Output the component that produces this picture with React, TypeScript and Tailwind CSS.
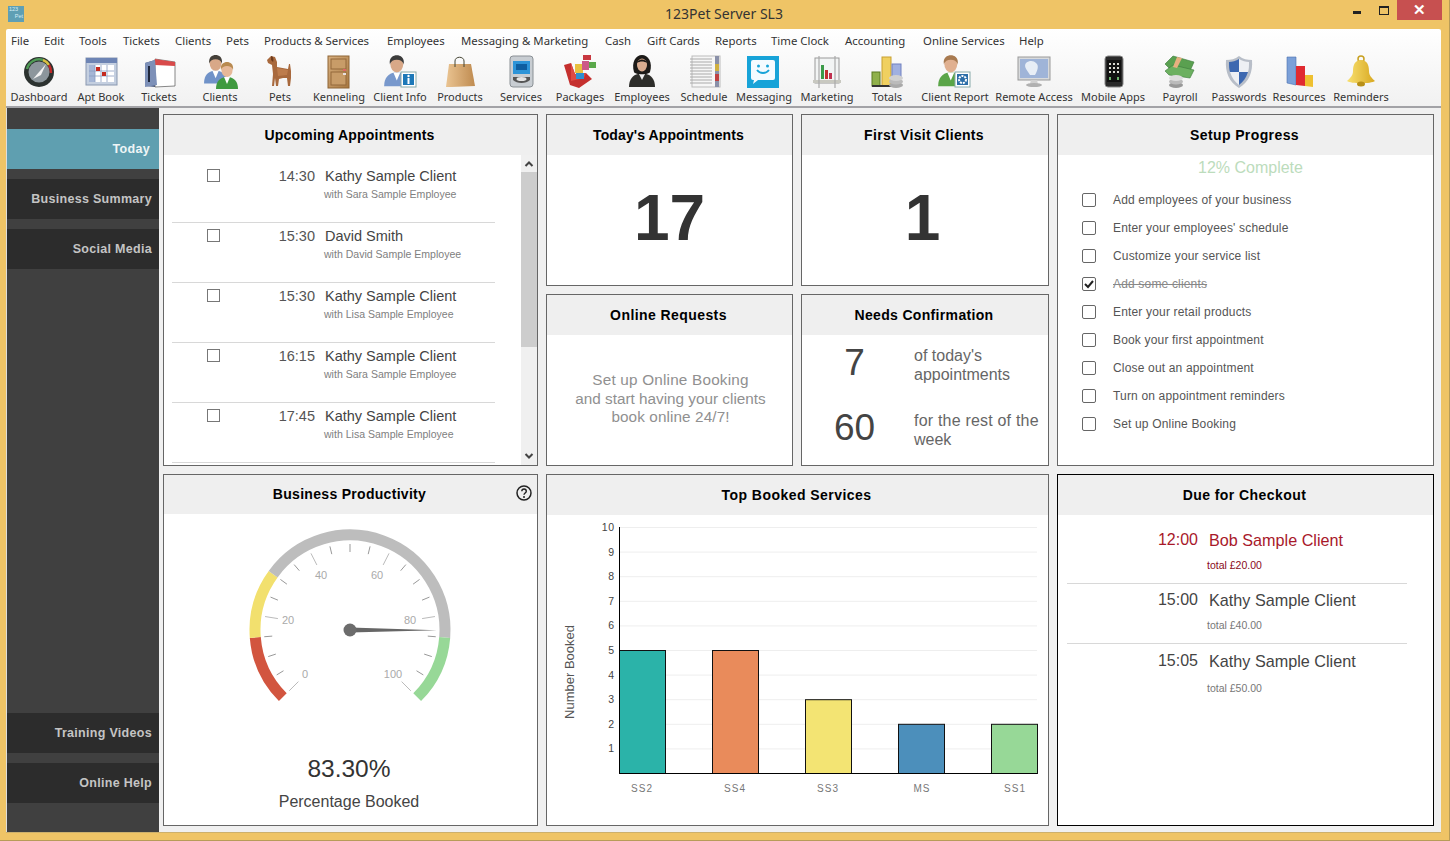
import React from "react";

const menu = [
  ["File", "w-[33px]"], ["Edit", "w-[35px]"], ["Tools", "w-[44px]"], ["Tickets", "w-[52px]"], ["Clients", "w-[51px]"],
  ["Pets", "w-[38px]"], ["Products & Services", "w-[123px]"], ["Employees", "w-[74px]"], ["Messaging & Marketing", "w-[144px]"],
  ["Cash", "w-[42px]"], ["Gift Cards", "w-[68px]"], ["Reports", "w-[56px]"], ["Time Clock", "w-[74px]"], ["Accounting", "w-[78px]"],
  ["Online Services", "w-[96px]"], ["Help", "w-[40px]"],
];

function Person({ x = 0, y = 0, s = 1, suit = "#6f8fc0", hair = "#3a3a3a", skin = "#d8a888", shirt = "#fff" }: any) {
  return (
    <g transform={`translate(${x} ${y}) scale(${s})`}>
      <path d="M1 28c0-8 4-11 9-12h4c5 1 9 4 9 12z" fill={suit} />
      <path d="M9 16l3 7 3-7z" fill={shirt} />
      <ellipse cx="12" cy="9" rx="5.6" ry="7" fill={skin} />
      <path d="M6 9C5 3 9 1 12 1s7 2 6 8c-1-3-3-4-6-4S7 6 6 9z" fill={hair} />
    </g>
  );
}

const icons: Record<string, React.ReactNode> = {
  Dashboard: (
    <>
      <circle cx="18" cy="18" r="15" fill="#2c3230" />
      <path d="M6 15A12.500 12.500 0 0 1 22 6" fill="none" stroke="#4f9a55" strokeWidth="2.500" />
      <path d="M22 6a12.500 12.500 0 0 1 6 5" fill="none" stroke="#d8c040" strokeWidth="2.500" />
      <path d="M28 11a12.500 12.500 0 0 1 2 8" fill="none" stroke="#c02828" strokeWidth="2.500" />
      <circle cx="18" cy="18" r="10.500" fill="#8c969c" />
      <path d="M12 25L25 10l-5 11z" fill="#f2f2f2" />
    </>
  ),
  "Apt Book": (
    <>
      <rect x="3" y="4" width="31" height="27" fill="#c4cfe0" stroke="#8a98b0" />
      <rect x="3" y="4" width="31" height="5" fill="#6d84b4" />
      <rect x="6" y="11" width="25" height="17" fill="#fff" />
      <path d="M6 11h6v17H6z" fill="#7f97c4" opacity=".7" />
      <path d="M12 11v17M18 11v17M24 11v17M6 17h25M6 22h25" stroke="#8b9cc0" strokeWidth=".8" />
      <rect x="13" y="13" width="4" height="4" fill="#c42a20" />
      <rect x="19" y="18" width="4" height="4" fill="#c42a20" />
    </>
  ),
  Tickets: (
    <>
      <path d="M4 9l10-3v27L4 32z" fill="#4a5a80" />
      <path d="M14 5l20 3v24l-20 1z" fill="#fff" stroke="#555" strokeWidth=".7" />
      <path d="M14 5l20 3v4l-20-1z" fill="#d84a4a" />
      <path d="M4 9l10-3 2 25-12 2z" fill="#7d90b8" />
      <path d="M8 12v16" stroke="#20283c" strokeWidth="2" />
    </>
  ),
  Clients: (
    <>
      <Person x={1} y={0} s={1.05} suit="#7092c8" hair="#45403a" />
      <Person x={13} y={7} s={1} suit="#3f9a3f" hair="#b88a50" skin="#e6b898" />
    </>
  ),
  Pets: (
    <>
      <path d="M5 6L9 2l4 1 2 5v5l11 2 1-5h1l1 7v7l-1 8h-2l-1-8h-4l-4 1-1 7h-2l-1-8-1 8h-2l1-12-1-9-4-2z" fill="#a8693d" />
      <path d="M9 2c2 0 3 3 2 6L9 6z" fill="#6e3c1e" />
      <path d="M15 14l11 2-1 5-9 1z" fill="#bd7c4c" />
    </>
  ),
  Kenneling: (
    <>
      <defs>
        <linearGradient id="door" x1="0" x2="1" y1="0" y2="1"><stop offset="0" stopColor="#d8b080" /><stop offset="1" stopColor="#a87840" /></linearGradient>
      </defs>
      <rect x="7" y="2" width="21" height="32" fill="url(#door)" stroke="#8e6434" />
      <rect x="10" y="5" width="15" height="10" fill="#c89c68" stroke="#93683a" />
      <rect x="10" y="18" width="15" height="13" fill="#c89c68" stroke="#93683a" />
      <rect x="22" y="15" width="3" height="2" fill="#d66" />
      <rect x="22" y="19" width="3" height="2" fill="#e8e0e0" />
    </>
  ),
  "Client Info": (
    <>
      <Person x={1} y={0} s={1.15} suit="#7898cc" hair="#3c3c3c" />
      <rect x="19" y="18" width="15" height="15" fill="#fff" stroke="#8aa" />
      <rect x="21" y="20" width="11" height="11" fill="#1d78b8" />
      <circle cx="26.500" cy="22" r="1.200" fill="#fff" />
      <rect x="25.500" y="24" width="2" height="6" fill="#fff" />
    </>
  ),
  Products: (
    <>
      <defs>
        <linearGradient id="bag" x1="0" x2="1" y1="0" y2="0"><stop offset="0" stopColor="#eac492" /><stop offset="1" stopColor="#bf8b50" /></linearGradient>
      </defs>
      <path d="M7 10h22l4 22-24 1H4z" fill="url(#bag)" />
      <path d="M13 13V7c0-5 9-5 9 0v6" fill="none" stroke="#443" strokeWidth="1" />
    </>
  ),
  Services: (
    <>
      <rect x="7" y="2" width="23" height="31" rx="3" fill="#c8cdd2" stroke="#8a9095" />
      <rect x="10" y="7" width="17" height="13" fill="#2d94d8" />
      <rect x="13" y="10" width="11" height="6" fill="#0e5ea0" />
      <path d="M10 23h17v3c-4 4-13 4-17 0z" fill="#555" />
      <ellipse cx="18.500" cy="25" rx="5" ry="2" fill="#e4e4e4" />
    </>
  ),
  Packages: (
    <>
      <path d="M2 11l7-2 4 11 11-1 6 6-13 9-9-3z" fill="#c5302e" />
      <path d="M9 9l4 11 11-1-2 5-13 3z" fill="#dd4a44" />
      <rect x="13" y="10" width="8" height="9" fill="#e8c040" />
      <rect x="20" y="7" width="7" height="9" fill="#cc5a88" />
      <rect x="21" y="1" width="8" height="5" fill="#c83840" />
      <rect x="27" y="8" width="7" height="6" fill="#5aa84a" />
      <rect x="14" y="19" width="8" height="6" fill="#2f8fd0" />
    </>
  ),
  Employees: (
    <>
      <path d="M5 33c0-8 4-12 9-13h8c5 1 9 5 9 13z" fill="#2d2d2a" />
      <path d="M15 20l3 6 3-6z" fill="#eee" />
      <path d="M10 18C7 8 12 1 18 1s11 7 8 17c-1 3-15 3-16 0z" fill="#1c1a18" />
      <ellipse cx="18" cy="11" rx="5" ry="6.500" fill="#d9ac90" />
      <path d="M13 9c1-4 8-5 10 0-3-2-7-2-10 0z" fill="#1c1a18" />
    </>
  ),
  Schedule: (
    <>
      <rect x="6" y="2" width="28" height="31" fill="#f6f6f6" stroke="#bbb" />
      <rect x="29" y="2" width="4" height="31" fill="#8a90a8" />
      <rect x="29" y="10" width="4" height="7" fill="#d0b040" />
      <rect x="29" y="20" width="4" height="7" fill="#c04040" />
      <path d="M4 5h22M4 8h22M4 11h22M4 14h22M4 17h22M4 20h22M4 23h22M4 26h22M4 29h22" stroke="#aaa" strokeWidth="1" />
    </>
  ),
  Messaging: (
    <>
      <rect x="1" y="2" width="32" height="32" fill="#17a3d8" />
      <path d="M5 8q0-2 2-2h20q2 0 2 2v16q0 2-2 2H12l-5 4 1-4H7q-2 0-2-2z" fill="#f4fbff" />
      <circle cx="12.500" cy="12" r="1.500" fill="#17a3d8" />
      <circle cx="21.500" cy="12" r="1.500" fill="#17a3d8" />
      <path d="M11 16c3 4 9 4 12 0" fill="none" stroke="#17a3d8" strokeWidth="1.800" />
    </>
  ),
  Marketing: (
    <>
      <rect x="6" y="4" width="24" height="25" fill="#f2f4f4" stroke="#999" />
      <rect x="4" y="26" width="28" height="3" fill="#c8c8c0" />
      <path d="M10 2v32M26 2v32" stroke="#aaa" strokeWidth="1.200" />
      <rect x="12" y="11" width="3" height="14" fill="#3a9a48" />
      <rect x="16" y="16" width="3" height="9" fill="#c03030" />
      <rect x="20" y="19" width="3" height="6" fill="#c03050" />
    </>
  ),
  Totals: (
    <>
      <rect x="3" y="18" width="8" height="14" fill="#8fb04a" stroke="#5a7a20" />
      <rect x="13" y="3" width="9" height="29" fill="#f0d060" stroke="#c8a030" />
      <rect x="23" y="10" width="9" height="14" fill="#a0b0e0" stroke="#7080c0" />
      <rect x="3" y="31" width="22" height="2" fill="#333" />
      <ellipse cx="27" cy="31" rx="7" ry="3" fill="#aaa" />
      <ellipse cx="27" cy="27.500" rx="7" ry="3" fill="#bbb" />
      <ellipse cx="27" cy="24" rx="7" ry="3" fill="#d0d0d0" />
    </>
  ),
  "Client Report": (
    <>
      <Person x={0} y={0} s={1.15} suit="#5aa548" hair="#a87a50" skin="#e0b090" />
      <rect x="18" y="18" width="15" height="15" fill="#fff" stroke="#8aa" />
      <rect x="20" y="20" width="11" height="11" fill="#2c6ea8" />
      <circle cx="25.500" cy="25.500" r="3.500" fill="none" stroke="#fff" strokeWidth="2" strokeDasharray="2 1" />
    </>
  ),
  "Remote Access": (
    <>
      <rect x="2" y="3" width="32" height="23" fill="#d8dadc" stroke="#999" />
      <rect x="4" y="5" width="28" height="19" fill="#9fb4d8" />
      <path d="M10 9c4-3 8-2 10 0 3 2 2 7-1 12h-5c-2-4-7-8-4-12z" fill="#e8eef6" />
      <path d="M15 26h6l1 4h-8z" fill="#d0d0d0" />
      <ellipse cx="18" cy="31" rx="8" ry="2" fill="#b0b0b0" />
    </>
  ),
  "Mobile Apps": (
    <>
      <rect x="10" y="2" width="18" height="31" rx="3" fill="#2a2a2a" stroke="#888" />
      <rect x="12" y="6" width="14" height="22" fill="#111" />
      <path d="M14 9h2v2h-2zM18 9h2v2h-2zM22 9h2v2h-2zM14 13h2v2h-2zM18 13h2v2h-2zM22 13h2v2h-2zM14 17h2v2h-2zM18 17h2v2h-2zM22 17h2v2h-2z" fill="#d8d8d0" />
      <path d="M14 23h2v3h-2zM22 23h2v3h-2z" fill="#6ab06a" />
    </>
  ),
  Payroll: (
    <>
      <path d="M3 10L11 2l21 6-4 9-21-3z" fill="#5aa050" stroke="#3a7a3a" strokeWidth=".6" />
      <path d="M3 17l8-6 21 5-4 8-21-3z" fill="#6cb060" stroke="#3a7a3a" strokeWidth=".6" />
      <path d="M15 3l5 1-5 10-4-1z" fill="#e8b080" />
      <ellipse cx="14" cy="31" rx="7" ry="3" fill="#999" />
      <ellipse cx="14" cy="27.500" rx="7" ry="3" fill="#bbb" />
      <ellipse cx="14" cy="24" rx="7" ry="3" fill="#ddd" />
    </>
  ),
  Passwords: (
    <>
      <path d="M18 2c4 3 8 4 13 4 1 12-3 22-13 28C8 28 4 18 5 6c5 0 9-1 13-4z" fill="#b8bec8" />
      <path d="M18 5c-3 2-7 3-10 3 0 4 0 7 1 10h9z" fill="#3d68b0" />
      <path d="M18 18h9c-2 6-5 10-9 13z" fill="#3d68b0" />
      <path d="M18 5c3 2 7 3 10 3 0 4 0 7-1 10h-9zM18 18H9c2 6 5 10 9 13z" fill="#eef0f4" />
    </>
  ),
  Resources: (
    <>
      <path d="M6 3h9v28L6 29z" fill="#7ba0d8" stroke="#4a70b0" strokeWidth=".6" />
      <path d="M15 12h9v20l-9-1z" fill="#e02a30" />
      <path d="M24 21h8v12l-8-1z" fill="#eec030" />
    </>
  ),
  Reminders: (
    <>
      <defs>
        <linearGradient id="bell" x1="0" x2="1" y1="0" y2="0"><stop offset="0" stopColor="#f8e070" /><stop offset="1" stopColor="#d8a820" /></linearGradient>
      </defs>
      <circle cx="18" cy="5" r="3" fill="none" stroke="#c8a020" strokeWidth="1.500" />
      <path d="M18 6c6 0 8 5 8 11 0 5 3 7 6 10-4 3-24 3-28 0 3-3 6-5 6-10 0-6 2-11 8-11z" fill="url(#bell)" />
      <ellipse cx="18" cy="30" rx="4" ry="2.500" fill="#b89018" />
    </>
  ),
};

const tools = [
  ["Dashboard", "w-[60px]"], ["Apt Book", "w-[64px]"], ["Tickets", "w-[52px]"], ["Clients", "w-[70px]"], ["Pets", "w-[50px]"],
  ["Kenneling", "w-[68px]"], ["Client Info", "w-[54px]"], ["Products", "w-[66px]"], ["Services", "w-[56px]"], ["Packages", "w-[62px]"],
  ["Employees", "w-[62px]"], ["Schedule", "w-[62px]"], ["Messaging", "w-[58px]"], ["Marketing", "w-[68px]"], ["Totals", "w-[52px]"],
  ["Client Report", "w-[84px]"], ["Remote Access", "w-[74px]"], ["Mobile Apps", "w-[84px]"], ["Payroll", "w-[50px]"],
  ["Passwords", "w-[68px]"], ["Resources", "w-[52px]"], ["Reminders", "w-[72px]"],
];

const appts = [
  ["14:30", "Kathy Sample Client", "with Sara Sample Employee"],
  ["15:30", "David Smith", "with David Sample Employee"],
  ["15:30", "Kathy Sample Client", "with Lisa Sample Employee"],
  ["16:15", "Kathy Sample Client", "with Sara Sample Employee"],
  ["17:45", "Kathy Sample Client", "with Lisa Sample Employee"],
];

const steps = [
  "Add employees of your business", "Enter your employees' schedule", "Customize your service list", "Add some clients",
  "Enter your retail products", "Book your first appointment", "Close out an appointment", "Turn on appointment reminders", "Set up Online Booking",
];

const dues = [
  { t: "12:00", n: "Bob Sample Client", s: "total £20.00", top: "pt-[6px]", sub: "pt-[9px] text-[#8a0a1a]", color: "text-[#a8182a]", line: true },
  { t: "15:00", n: "Kathy Sample Client", s: "total £40.00", top: "pt-[6px]", sub: "pt-[9px] text-[#777]", color: "text-[#444]", line: true },
  { t: "15:05", n: "Kathy Sample Client", s: "total £50.00", top: "pt-[7px]", sub: "pt-[11px] text-[#777]", color: "text-[#444]", line: false },
];

function Panel({ title, tr, head = "h-[40px]", className, children }: { title: string; tr: string; head?: string; className?: string; children?: React.ReactNode }) {
  return (
    <div className={`relative flex flex-col overflow-hidden border bg-white ${className ?? "border-[#666]"}`}>
      <div className={`flex shrink-0 items-center justify-center bg-[#efefef] pr-[2px] text-[14px] font-bold text-black ${head} ${tr}`}>{title}</div>
      {children}
    </div>
  );
}

function Side({ label, active }: { label: string; active?: boolean }) {
  return (
    <div className={`flex h-[40px] items-center justify-end pt-[1px] text-[12.500px] font-bold tracking-[0.3px] ${active ? "bg-[#5f9fb0] pr-[9px] text-[#eef5f6]" : "bg-[#2c2c2c] pr-[7px] text-[#c4c4c4]"}`}>
      {label}
    </div>
  );
}

function Gauge() {
  const cx = 186, cy = 116;
  const pt = (v: number, r: number) => {
    const a = ((-225 + v * 2.7) * Math.PI) / 180;
    return [cx + r * Math.cos(a), cy + r * Math.sin(a)];
  };
  const arc = (a: number, b: number, color: string) => {
    const [x1, y1] = pt(a, 95);
    const [x2, y2] = pt(b, 95);
    return <path d={`M${x1} ${y1}A95 95 0 ${(b - a) * 2.7 > 180 ? 1 : 0} 1 ${x2} ${y2}`} fill="none" stroke={color} strokeWidth="11" />;
  };
  const ticks = [];
  for (let v = 0; v <= 100; v += 5) {
    const major = v % 20 === 0;
    const [x1, y1] = pt(v, major ? 73 : 78);
    const [x2, y2] = pt(v, 86);
    ticks.push(<line key={v} x1={x1} y1={y1} x2={x2} y2={y2} stroke={major ? "#bbb" : "#999"} strokeWidth="1" />);
  }
  const labels: [string, number, number][] = [["0", 141, 164], ["20", 124, 110], ["40", 157, 65], ["60", 213, 65], ["80", 246, 110], ["100", 229, 164]];
  return (
    <svg width="373" height="241" className="block">
      {arc(0, 15, "#d2553f")}
      {arc(15, 30, "#f2e06e")}
      {arc(30, 85, "#bdbdbd")}
      {arc(85, 100, "#97d897")}
      {ticks}
      {labels.map(([t, x, y]) => (
        <text key={t} x={x} y={y} textAnchor="middle" fontSize="11" fill="#aaa">{t}</text>
      ))}
      <path d={`M${cx} ${cy - 2.500}L${cx + 87} ${cy + 0.300}L${cx} ${cy + 2.500}z`} fill="#666" />
      <circle cx={cx} cy={cy} r="6.500" fill="#6c6c6c" />
    </svg>
  );
}

function BarChart() {
  const left = 72, bottom = 258, step = 24.6;
  const bars: [string, number, number, string, number][] = [
    ["SS2", 72, 5, "#2bb3a9", 95],
    ["SS4", 165, 5, "#e98b5b", 188],
    ["SS3", 258, 3, "#f3e473", 281],
    ["MS", 351, 2, "#4c8fbb", 375],
    ["SS1", 444, 2, "#97d897", 468],
  ];
  return (
    <svg width="501" height="310" className="block">
      {[1, 2, 3, 4, 5, 6, 7, 8, 9, 10].map((n) => (
        <g key={n}>
          <line x1={left} x2={490} y1={bottom - n * step + 0.500} y2={bottom - n * step + 0.500} stroke="#eeeeee" />
          <text x={68} y={bottom - n * step + 4} textAnchor="end" fontSize="10.500" letterSpacing="0.8" fill="#444">{n}</text>
        </g>
      ))}
      {bars.map(([t, x, n, c, lx]) => (
        <g key={t}>
          <rect x={x + 0.500} y={bottom - n * step + 0.500} width="46" height={n * step} fill={c} stroke="#111" />
          <text x={lx} y={277} textAnchor="middle" fontSize="10" letterSpacing="1" fill="#777">{t}</text>
        </g>
      ))}
      <path d={`M${left + 0.500} 12V${bottom + 0.500}H490`} fill="none" stroke="#000" />
      <text transform="translate(27 157) rotate(-90)" textAnchor="middle" fontSize="13" fill="#555">Number Booked</text>
    </svg>
  );
}

export default function App() {
  return (
    <div className="flex h-[841px] w-[1450px] flex-col overflow-hidden border-r border-[#b89c58] bg-[#efc466] font-['Liberation_Sans',Arial,sans-serif]">
      <div className="relative flex h-[29px] shrink-0 items-start pl-[8px] pt-[6px]">
        <div className="flex h-[16px] w-[16px] flex-col bg-[#5f9fb4] px-[1px] text-[5.500px] leading-[7px] text-[#d8eef4]">
          <span>123</span>
          <span className="text-right">Pet</span>
        </div>
        <div className="absolute left-0 right-[1px] top-[4px] text-center font-['Noto_Sans',sans-serif] text-[14px] leading-[20px] text-[#333]">123Pet Server SL3</div>
        <div className="absolute right-[7px] top-0 flex items-start">
          <div className="mr-[18px] mt-[11px] h-[3px] w-[8px] bg-[#222]" />
          <div className="mr-[8px] mt-[6px] h-[9px] w-[10px] border border-t-2 border-[#222]" />
          <div className="flex h-[20px] w-[45px] items-center justify-center bg-[#c75050] text-[15px] font-bold text-white">✕</div>
        </div>
      </div>

      <div className="ml-[6px] mr-[8px] flex min-h-0 flex-1 flex-col">
        <div className="h-[79px] shrink-0 rounded-t-[2px] border-b-[2px] border-[#a2a2a6] bg-gradient-to-b from-white to-[#f1f1f1] font-['Noto_Sans',sans-serif]">
          <div className="flex h-[24px] items-center pl-[5px] text-[11.400px] text-[#333]">
            {menu.map(([m, w]) => (
              <div key={m} className={`shrink-0 whitespace-nowrap ${w}`}>{m}</div>
            ))}
          </div>
          <div className="flex pl-[3px]">
            {tools.map(([t, w]) => (
              <div key={t} className={`flex shrink-0 flex-col items-center ${w}`}>
                <svg width="36" height="36" viewBox="0 0 36 36" className="mt-[1px]">{icons[t]}</svg>
                <span className="-mt-[1px] whitespace-nowrap text-[11px] leading-[15px] text-[#333]">{t}</span>
              </div>
            ))}
          </div>
        </div>

        <div className="flex min-h-0 flex-1 border-l border-[#ddd] bg-[#f0f0f0]">
          <div className="flex w-[152px] shrink-0 flex-col bg-[#404040] pt-[21px]">
            <div className="flex flex-col gap-[10px]">
              <Side label="Today" active />
              <Side label="Business Summary" />
              <Side label="Social Media" />
            </div>
            <div className="mt-auto mb-[29px] flex flex-col gap-[10px]">
              <Side label="Training Videos" />
              <Side label="Online Help" />
            </div>
          </div>

          <div className="grid grid-cols-[375px_247px_248px_377px] grid-rows-[172px_172px_352px] gap-[8px] pl-[4px] pt-[6px]">
            <Panel title="Upcoming Appointments" tr="tracking-[0.2px]" className="row-span-2 border-[#666]">
              <div className="flex min-h-0 flex-1">
                <div className="min-w-0 flex-1 overflow-hidden pl-[8px] pt-[8px]">
                  {appts.map(([t, n, s]) => (
                    <div key={t + s} className="flex h-[60px] w-[323px] border-b border-[#d8d8d8] pl-[35px]">
                      <div className="mt-[6px] h-[13px] w-[13px] shrink-0 border border-[#777] bg-white" />
                      <div className="w-[95px] shrink-0 pt-[4px] text-right text-[14.500px] leading-[18px] text-[#555]">{t}</div>
                      <div className="pl-[10px] pt-[4px]">
                        <div className="whitespace-nowrap text-[14.500px] leading-[18px] text-[#444]">{n}</div>
                        <div className="-ml-[1px] mt-[3px] whitespace-nowrap text-[10.550px] leading-[13px] text-[#808080]">{s}</div>
                      </div>
                    </div>
                  ))}
                </div>
                <div className="relative w-[16px] shrink-0 bg-[#f0f0f0] text-[#444]">
                  <svg width="16" height="16" className="absolute left-0 top-0"><path d="M4.500 11L8 7.500 11.500 11" fill="none" stroke="#444" strokeWidth="2" /></svg>
                  <div className="absolute left-0 right-0 top-[17px] h-[175px] bg-[#cdcdcd]" />
                  <svg width="16" height="16" className="absolute bottom-0 left-0"><path d="M4.500 5L8 8.500 11.500 5" fill="none" stroke="#444" strokeWidth="2" /></svg>
                </div>
              </div>
            </Panel>

            <Panel title="Today's Appointments" tr="tracking-[0.1px]">
              <div className="flex flex-1 items-center justify-center pb-[5px] text-[64px] font-bold leading-none text-[#333]">17</div>
            </Panel>
            <Panel title="First Visit Clients" tr="tracking-[0.3px]">
              <div className="flex flex-1 items-center justify-center pb-[5px] pr-[5px] text-[64px] font-bold leading-none text-[#333]">1</div>
            </Panel>

            <Panel title="Setup Progress" tr="tracking-[0.4px]" className="row-span-2 border-[#666]">
              <div className="pl-[10px] pt-[3px] text-center text-[16px] leading-[19px] text-[#bcdcbc]">12% Complete</div>
              <div className="flex flex-col pl-[24px] pt-[9px]">
                {steps.map((s) => (
                  <div key={s} className="flex h-[28px] items-center">
                    <div className="flex h-[14px] w-[14px] shrink-0 items-center justify-center rounded-[2px] border border-[#666] bg-white">
                      {s === "Add some clients" && (
                        <svg width="10" height="10" viewBox="0 0 10 10"><path d="M1 5l3 3 5-6" fill="none" stroke="#222" strokeWidth="2" /></svg>
                      )}
                    </div>
                    <span className={`pl-[17px] text-[12px] tracking-[0.17px] ${s === "Add some clients" ? "text-[#888] line-through" : "text-[#555]"}`}>{s}</span>
                  </div>
                ))}
              </div>
            </Panel>

            <Panel title="Online Requests" tr="tracking-[0.42px]">
              <div className="flex flex-1 items-center justify-center pb-[2px] pl-[2px] text-center text-[15.300px] leading-[18.500px] text-[#909090]">
                <div><span className="tracking-[0.2px]">Set up Online Booking</span><br />and start having your clients<br /><span className="tracking-[0.1px]">book online 24/7!</span></div>
              </div>
            </Panel>
            <Panel title="Needs Confirmation" tr="tracking-[0.33px]">
              <div className="flex flex-1 flex-col px-[8px] pt-[9px]">
                <div className="flex h-[65px] items-start">
                  <div className="w-[89px] text-center text-[37px] leading-[38px] text-[#444]">7</div>
                  <div className="pl-[15px] pt-[2px] text-[16px] leading-[19px] text-[#666]">of today's<br />appointments</div>
                </div>
                <div className="flex items-start">
                  <div className="w-[89px] text-center text-[37px] leading-[38px] text-[#444]">60</div>
                  <div className="pl-[15px] pt-[2px] text-[16px] leading-[19px] text-[#666]"><span className="tracking-[0.2px]">for the rest of the</span><br />week</div>
                </div>
              </div>
            </Panel>

            <Panel title="Business Productivity" tr="tracking-[0.3px]" head="h-[39px]" className="border-[#666]">
              <svg width="18" height="18" viewBox="0 0 18 18" className="absolute right-[4px] top-[9px]">
                <circle cx="9" cy="9" r="7" fill="none" stroke="#222" strokeWidth="1.500" />
                <path d="M6.800 7.200c0-3 4.500-3 4.500 0 0 1.800-2.300 1.800-2.300 3.600" fill="none" stroke="#222" strokeWidth="1.400" />
                <circle cx="9" cy="13" r="1" fill="#222" />
              </svg>
              <Gauge />
              <div className="-mt-[1px] pr-[3px] text-center text-[24.500px] leading-[30px] text-[#333]">83.30%</div>
              <div className="mt-[8px] pr-[3px] text-center text-[16px] leading-[20px] text-[#444]">Percentage Booked</div>
            </Panel>

            <Panel title="Top Booked Services" tr="tracking-[0.45px]" className="col-span-2 border-[#666]">
              <BarChart />
            </Panel>

            <Panel title="Due for Checkout" tr="tracking-[0.43px]" className="border-black">
              <div className="flex flex-col px-[9px] pt-[9px]">
                {dues.map((d) => (
                  <div key={d.t} className={`h-[60px] w-[340px] ${d.top} ${d.line ? "border-b border-[#d8d8d8]" : ""} ${d.color}`}>
                    <div className="flex leading-[20px]">
                      <span className="w-[131px] text-right text-[16px]">{d.t}</span>
                      <span className="pl-[11px] text-[16.200px]">{d.n}</span>
                    </div>
                    <div className={`pl-[140px] text-[10.500px] leading-[12px] ${d.sub}`}>{d.s}</div>
                  </div>
                ))}
              </div>
            </Panel>
          </div>
        </div>
        <div className="h-[1px] shrink-0 bg-[#cdb06c]" />
      </div>
      <div className="h-[8px] shrink-0 border-b border-[#b89c58]" />
    </div>
  );
}
